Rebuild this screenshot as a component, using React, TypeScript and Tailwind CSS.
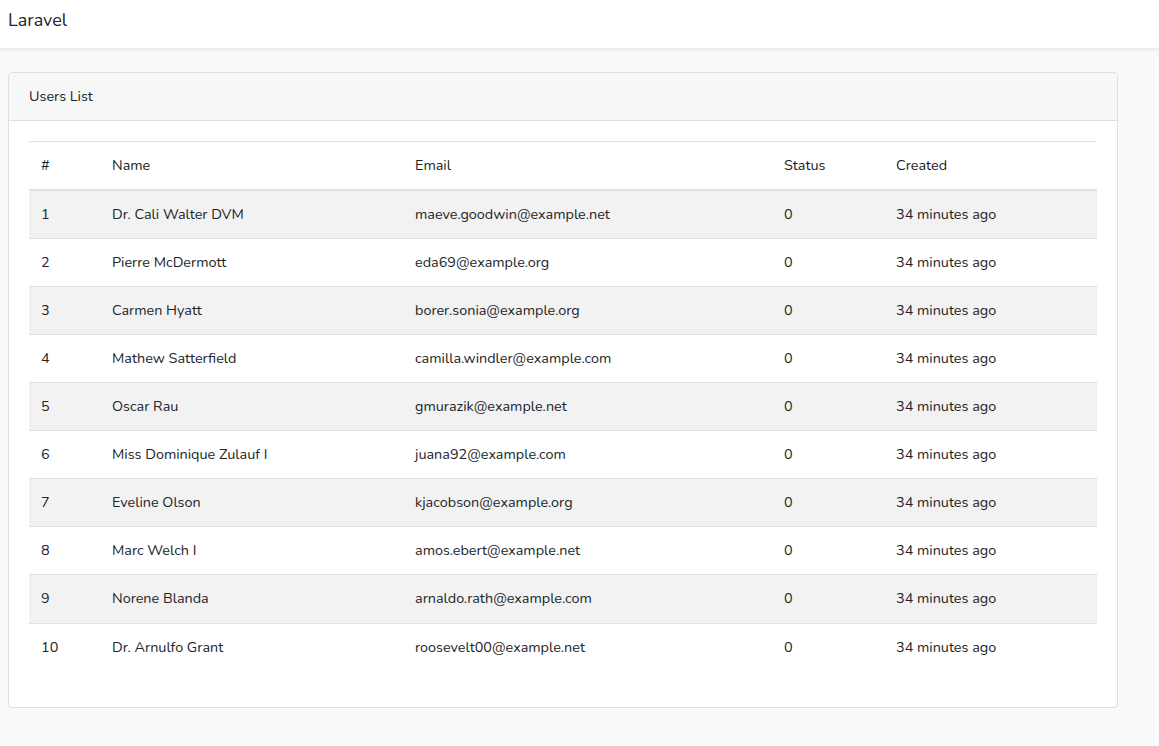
const users = [
  { id: 1, name: "Dr. Cali Walter DVM", email: "maeve.goodwin@example.net" },
  { id: 2, name: "Pierre McDermott", email: "eda69@example.org" },
  { id: 3, name: "Carmen Hyatt", email: "borer.sonia@example.org" },
  { id: 4, name: "Mathew Satterfield", email: "camilla.windler@example.com" },
  { id: 5, name: "Oscar Rau", email: "gmurazik@example.net" },
  { id: 6, name: "Miss Dominique Zulauf I", email: "juana92@example.com" },
  { id: 7, name: "Eveline Olson", email: "kjacobson@example.org" },
  { id: 8, name: "Marc Welch I", email: "amos.ebert@example.net" },
  { id: 9, name: "Norene Blanda", email: "arnaldo.rath@example.com" },
  { id: 10, name: "Dr. Arnulfo Grant", email: "roosevelt00@example.net" },
]

export default function App() {
  return (
    <div className="min-h-screen bg-[#f8fafc] text-[#212529] text-[14.4px] leading-[1.6] font-['Nunito','Lato',sans-serif]">
      {/* Navbar */}
      <nav className="h-12 bg-white flex items-center px-2 shadow-[0_2px_4px_rgba(0,0,0,0.075)] relative">
        <span className="text-[18px] -mt-[7px]">Laravel</span>
      </nav>

      <main className="py-6 px-2">
        <div className="w-[1110px] bg-white border border-[#dfdfdf] rounded">
          <div className="px-5 py-3 bg-[#f7f7f7] border-b border-[#dfdfdf] rounded-t">Users List</div>

          <div className="p-5">
            <table className="w-full table-fixed border-collapse mb-4">
              <colgroup>
                <col className="w-[71px]" />
                <col className="w-[303px]" />
                <col className="w-[369px]" />
                <col className="w-[112px]" />
                <col />
              </colgroup>
              <thead>
                <tr className="border-t border-[#dee2e6] border-b-2">
                  <th className="p-3 text-left font-normal text-[#1a1d20]">#</th>
                  <th className="p-3 text-left font-normal text-[#1a1d20]">Name</th>
                  <th className="p-3 text-left font-normal text-[#1a1d20]">Email</th>
                  <th className="p-3 text-left font-normal text-[#1a1d20]">Status</th>
                  <th className="p-3 text-left font-normal text-[#1a1d20]">Created</th>
                </tr>
              </thead>
              <tbody>
                {users.map((u) => (
                  <tr key={u.id} className="border-t border-[#dee2e6] odd:bg-[#f2f2f2]">
                    <td className="p-3">{u.id}</td>
                    <td className="p-3">{u.name}</td>
                    <td className="p-3">{u.email}</td>
                    <td className="p-3">0</td>
                    <td className="p-3">34 minutes ago</td>
                  </tr>
                ))}
              </tbody>
            </table>
          </div>
        </div>
      </main>
    </div>
  )
}
